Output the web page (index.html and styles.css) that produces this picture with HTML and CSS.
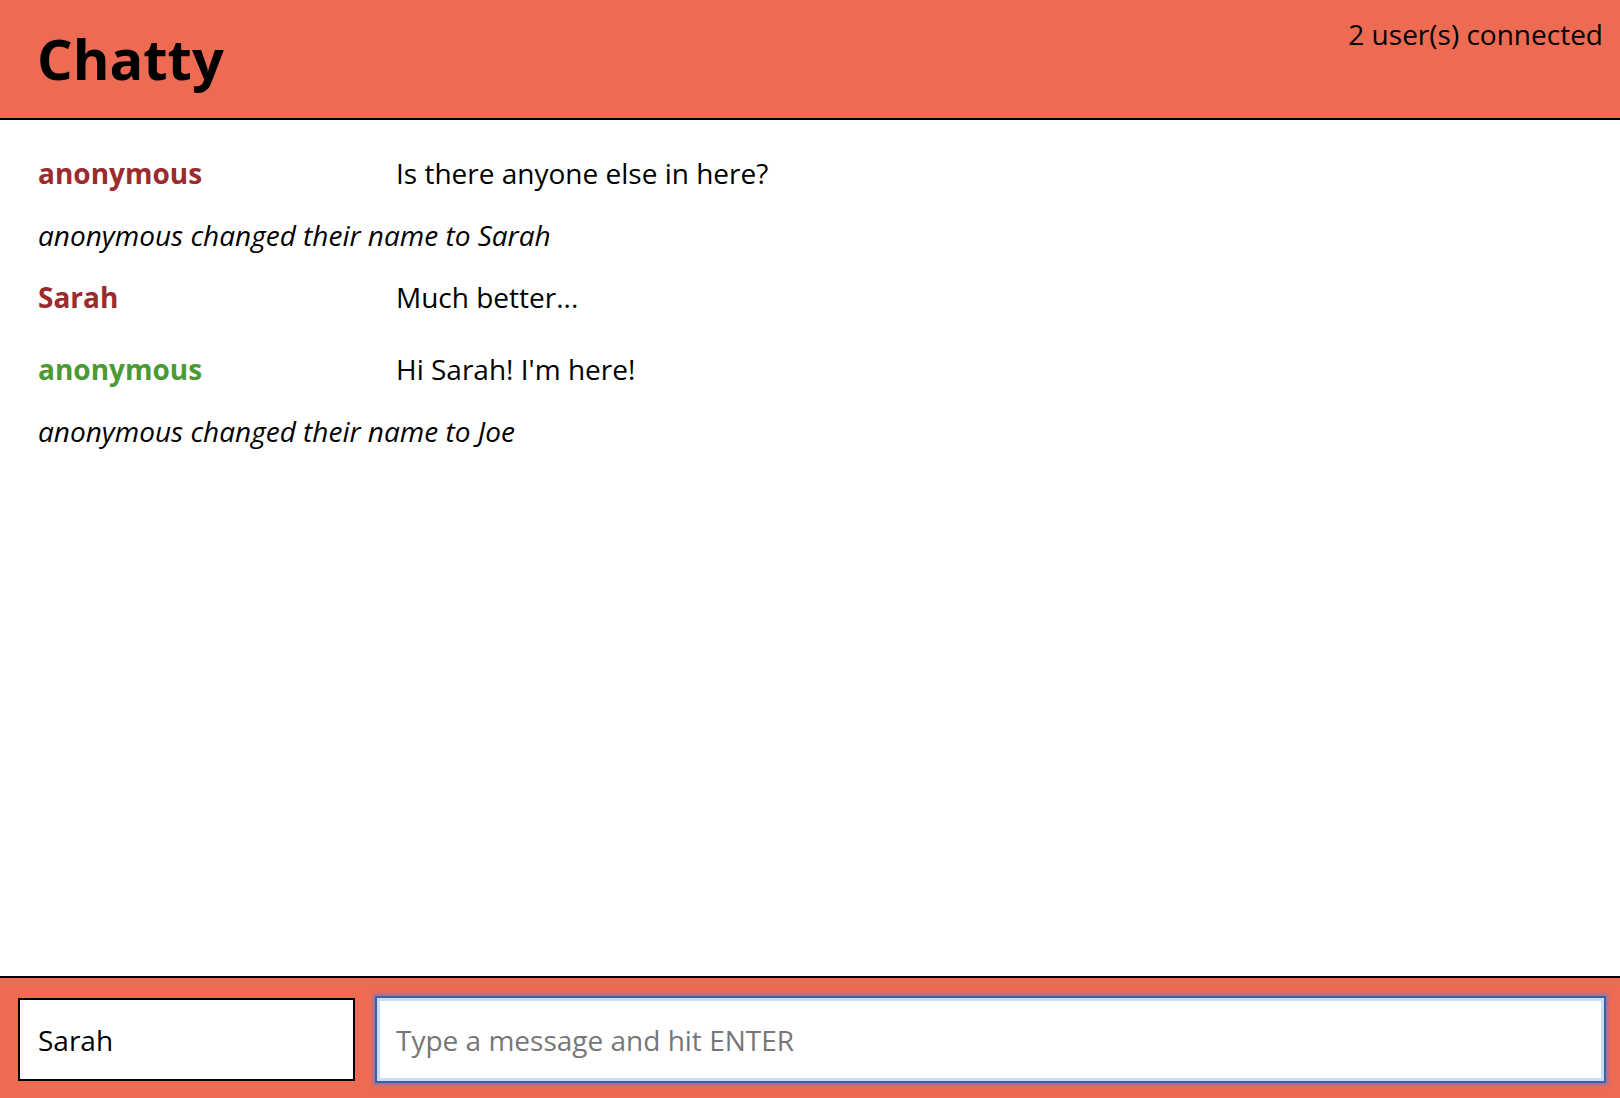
FILE: index.html
```html
<!DOCTYPE html>
<html lang="en">
<head>
<meta charset="utf-8">
<title>Chatty</title>
<link rel="stylesheet" href="styles.css">
</head>
<body>
<div class="app">
  <nav class="navbar">
    <h1 class="brand">Chatty</h1>
    <span class="user-count">2 user(s) connected</span>
  </nav>
  <main class="messages">
    <div class="message">
      <span class="username red">anonymous</span>
      <span class="content">Is there anyone else in here?</span>
    </div>
    <div class="message system">anonymous changed their name to Sarah</div>
    <div class="message">
      <span class="username red">Sarah</span>
      <span class="content">Much better...</span>
    </div>
    <div class="message spaced">
      <span class="username green">anonymous</span>
      <span class="content">Hi Sarah! I'm here!</span>
    </div>
    <div class="message system">anonymous changed their name to Joe</div>
  </main>
  <footer class="chatbar">
    <input class="chatbar-username" type="text" value="Sarah">
    <input class="chatbar-message focused" type="text" placeholder="Type a message and hit ENTER">
  </footer>
</div>
</body>
</html>
```

FILE: styles.css
```css
* { box-sizing: border-box; }

html, body {
  margin: 0;
  padding: 0;
  height: 100%;
}

body {
  font-family: "Open Sans", "Noto Sans", sans-serif;
  font-size: 28px;
  color: #000;
  background: #fff;
}

.app {
  display: flex;
  flex-direction: column;
  height: 100vh;
}

.navbar {
  display: flex;
  justify-content: space-between;
  align-items: flex-start;
  background: #ee6b53;
  height: 120px;
  padding: 18px 17px 0 37px;
  border-bottom: 2px solid #000;
  flex: none;
}

.brand {
  margin: 0;
  font-size: 56px;
  line-height: 80px;
  font-weight: 700;
}

.user-count {
  margin-top: -3px;
  font-size: 28px;
  line-height: 38px;
}

.messages {
  flex: 1;
  padding: 34px 38px 0 38px;
}

.message {
  display: flex;
  line-height: 38px;
  padding-bottom: 24px;
}

.message.spaced {
  padding-top: 10px;
}

.username {
  width: 358px;
  flex: none;
  font-weight: 700;
}

.username.red { color: #9a2c2e; }
.username.green { color: #4b9a35; }

.message.system {
  font-style: italic;
}

.chatbar {
  flex: none;
  display: flex;
  gap: 22px;
  height: 122px;
  background: #ee6b53;
  border-top: 2px solid #000;
  padding: 20px 16px 0 18px;
}

.chatbar input {
  font-family: "Open Sans", "Noto Sans", sans-serif;
  font-size: 28px;
  height: 83px;
  margin: 0;
  background: #fff;
  color: #000;
}

.chatbar-username {
  width: 337px;
  flex: none;
  border: 2px solid #000;
  padding: 0 0 0 18px;
  outline: none;
}

.chatbar-message {
  flex: 1;
  border: 3px solid #cbdcf5;
  padding: 0 0 0 16px;
  outline: none;
  box-shadow: 0 0 0 2px #3763a4, 0 0 3px 4px rgba(105, 120, 215, 0.7);
}

.chatbar-message::placeholder {
  color: #777;
  opacity: 1;
}
```
